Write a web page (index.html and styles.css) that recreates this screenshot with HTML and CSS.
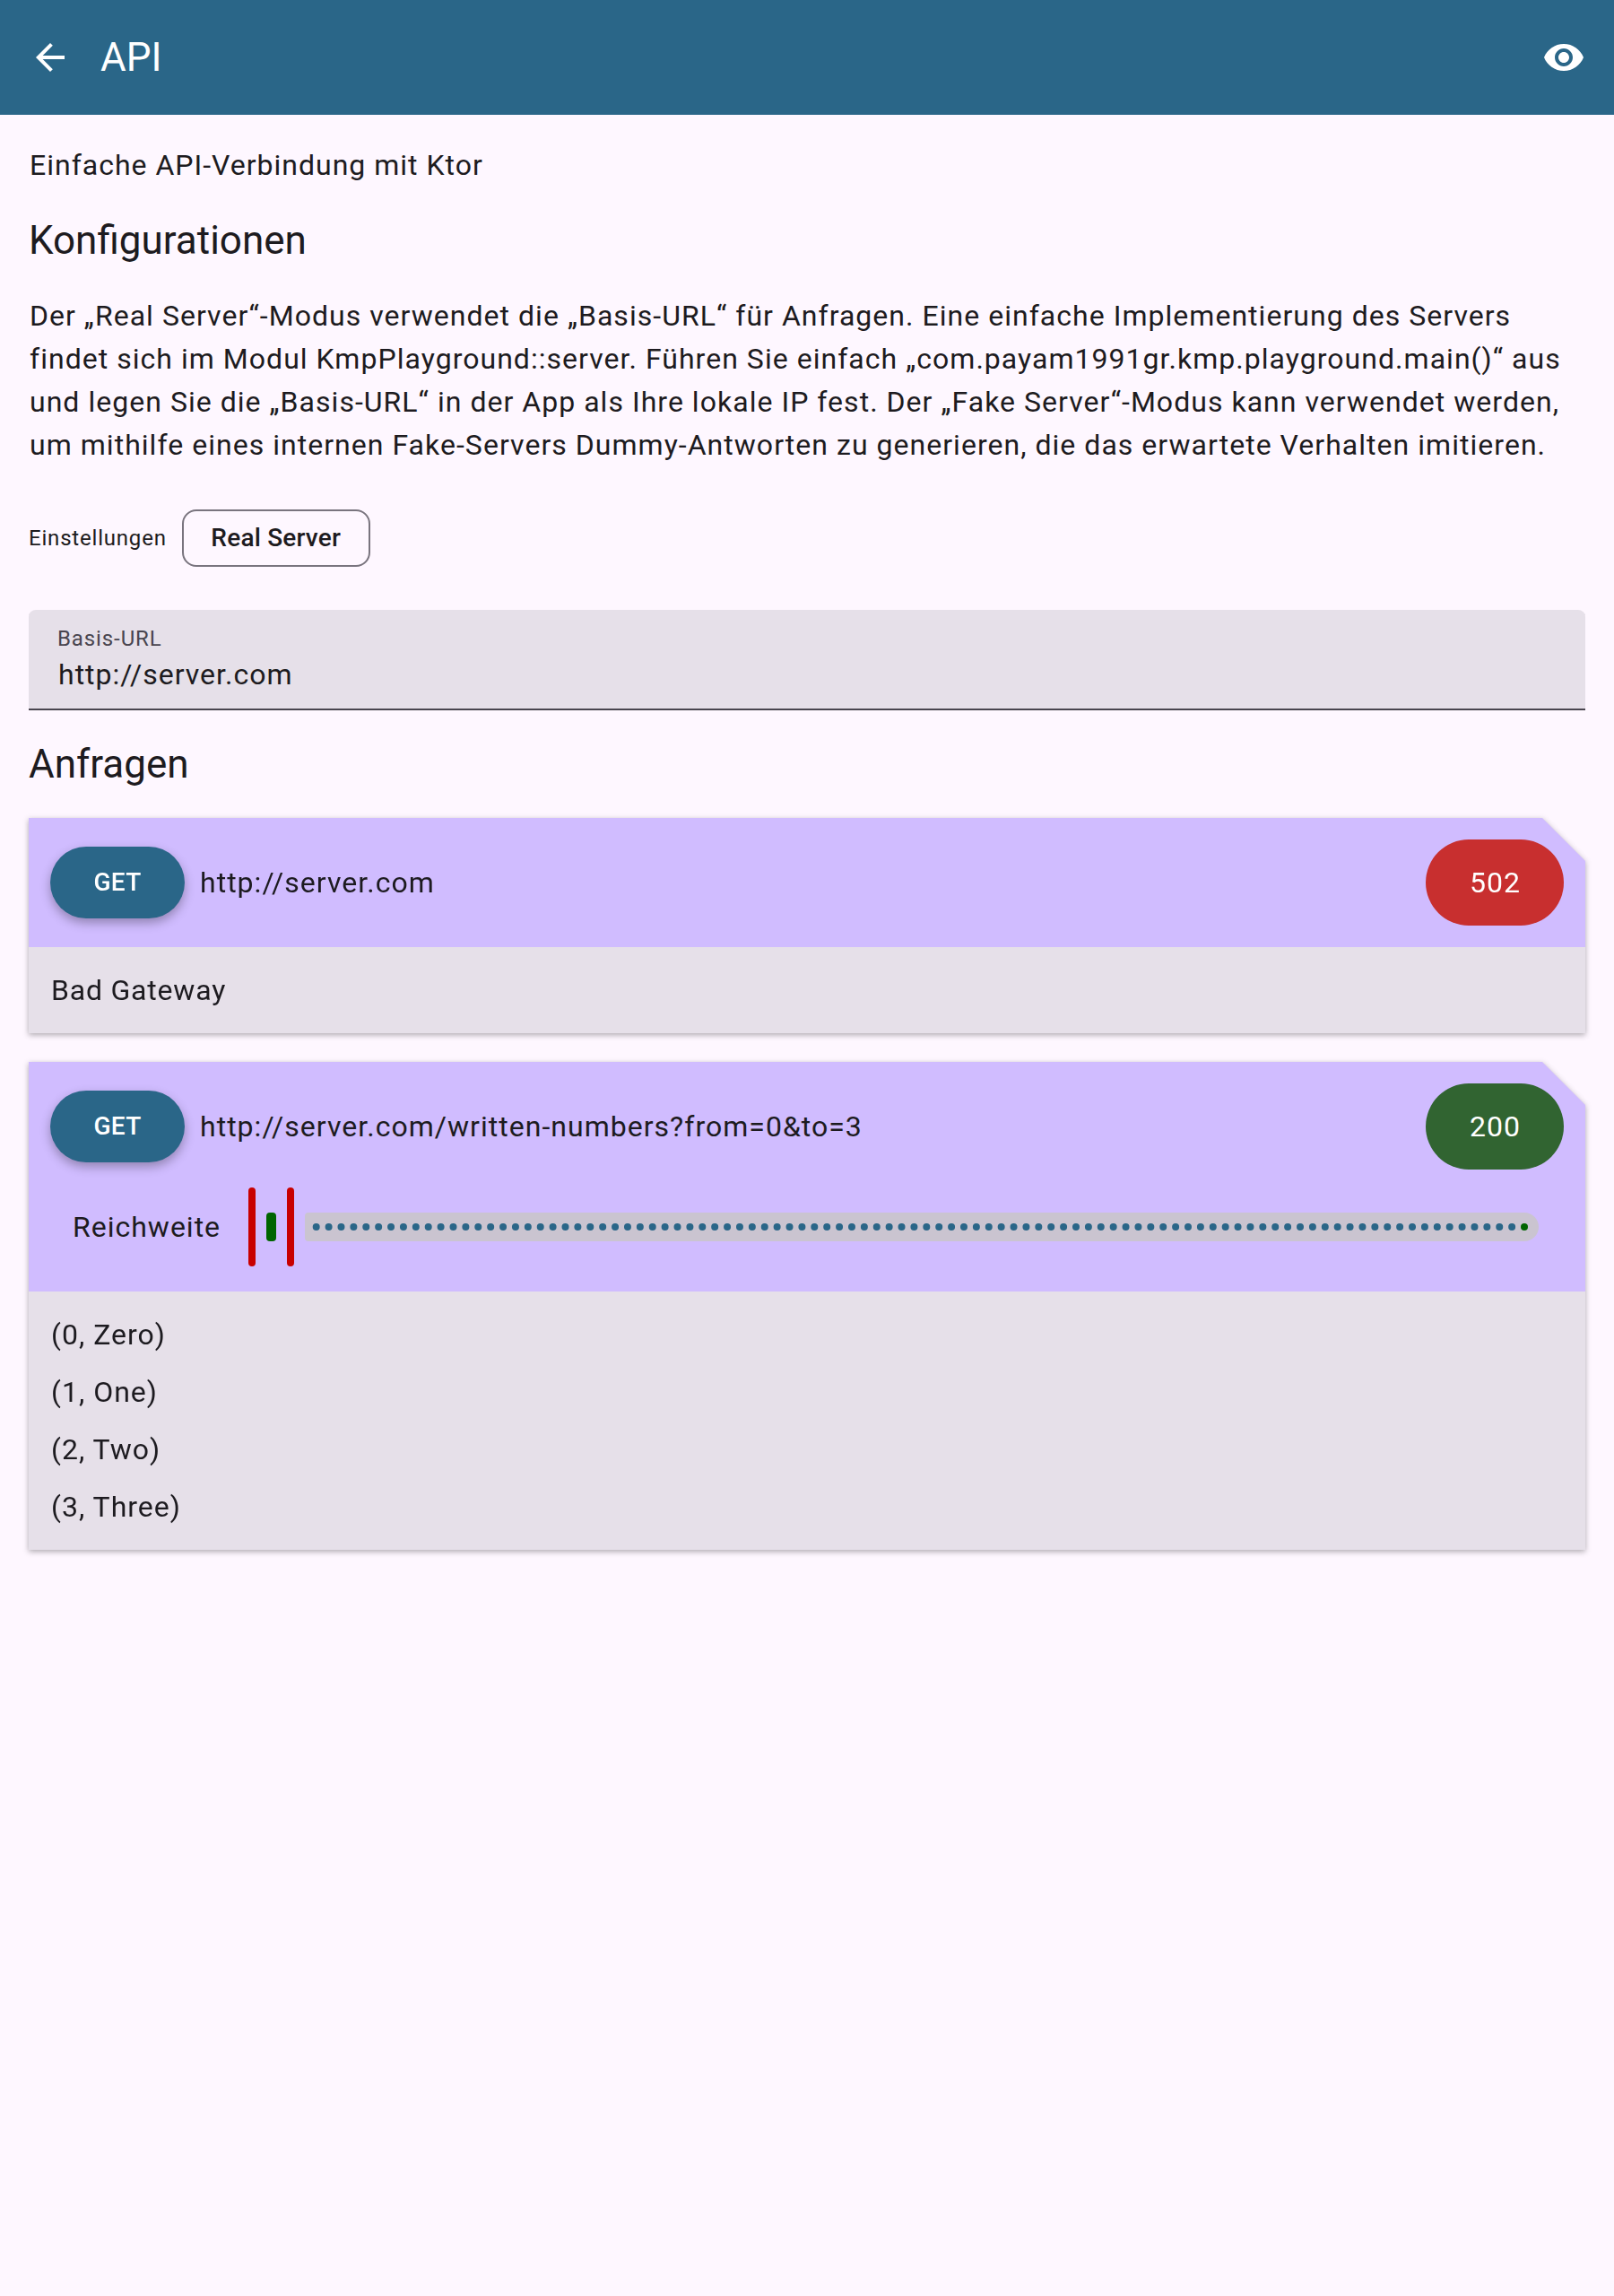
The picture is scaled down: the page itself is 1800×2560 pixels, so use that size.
FILE: index.html
```html
<!DOCTYPE html>
<html lang="de">
<head>
<meta charset="utf-8">
<title>API</title>
<link rel="stylesheet" href="styles.css">
</head>
<body>
<header class="app-bar">
  <svg class="icon" viewBox="0 0 24 24"><path d="M20 11H7.83l5.59-5.59L12 4l-8 8 8 8 1.41-1.41L7.83 13H20v-2z"/></svg>
  <h1 class="title">API</h1>
  <svg class="icon" viewBox="0 0 24 24"><path d="M12 4.5C7 4.5 2.73 7.61 1 12c1.73 4.39 6 7.5 11 7.5s9.27-3.11 11-7.5c-1.73-4.39-6-7.5-11-7.5zM12 17c-2.76 0-5-2.24-5-5s2.24-5 5-5 5 2.24 5 5-2.24 5-5 5zm0-8c-1.66 0-3 1.34-3 3s1.34 3 3 3 3-1.34 3-3-1.34-3-3-3z"/></svg>
</header>
<main class="content">
  <p>Einfache API-Verbindung mit Ktor</p>
  <h2 class="title">Konfigurationen</h2>
  <p class="description">Der „Real Server“-Modus verwendet die „Basis-URL“ für Anfragen. Eine einfache Implementierung des Servers<br>findet sich im Modul KmpPlayground::server. Führen Sie einfach „com.payam1991gr.kmp.playground.main()“ aus<br>und legen Sie die „Basis-URL“ in der App als Ihre lokale IP fest. Der „Fake Server“-Modus kann verwendet werden,<br>um mithilfe eines internen Fake-Servers Dummy-Antworten zu generieren, die das erwartete Verhalten imitieren.</p>
  <div class="settings">
    <span class="small">Einstellungen</span>
    <button class="chip">Real Server</button>
  </div>
  <div class="field">
    <span class="small field-label">Basis-URL</span>
    <span>http://server.com</span>
  </div>
  <h2 class="title">Anfragen</h2>
  <div class="card-shadow">
    <section class="card">
      <div class="card-head">
        <div class="request">
          <button class="get">GET</button>
          <span class="url">http://server.com</span>
          <span class="status status-error">502</span>
        </div>
      </div>
      <div class="card-body"><span class="message">Bad Gateway</span></div>
    </section>
  </div>
  <div class="card-shadow">
    <section class="card">
      <div class="card-head">
        <div class="request">
          <button class="get">GET</button>
          <span class="url">http://server.com/written-numbers?from=0&amp;to=3</span>
          <span class="status status-ok">200</span>
        </div>
        <div class="range">
          <span class="range-label">Reichweite</span>
          <span class="thumb"></span>
          <span class="track-active"></span>
          <span class="thumb"></span>
          <svg class="track" viewBox="0 0 1376 32">
            <path class="track-fill" d="M4 0H1360a16 16 0 0 1 0 32H4a4 4 0 0 1-4-4V4a4 4 0 0 1 4-4z"/>
            <path class="ticks" d="M12.7 16H1347"/>
            <circle class="track-end" cx="1360" cy="16" r="4"/>
          </svg>
        </div>
      </div>
      <div class="card-body">
        <span>(0, Zero)</span>
        <span>(1, One)</span>
        <span>(2, Two)</span>
        <span>(3, Three)</span>
      </div>
    </section>
  </div>
</main>
</body>
</html>
```
FILE: styles.css
```css
* { box-sizing: border-box; }
body {
  margin: 0;
  min-height: 2560px;
  background: #fef7ff;
  color: #1d1b20;
  font: 400 32px/48px Roboto, sans-serif;
  letter-spacing: 1px;
  text-indent: 1px;
}
h1, h2, p { margin: 0; }
button { font: inherit; color: inherit; text-indent: 0; }
.title { font-size: 44px; line-height: 56px; font-weight: 400; letter-spacing: 0; text-indent: 0; }
.small { font-size: 24px; line-height: 32px; letter-spacing: 0.8px; text-indent: 0; }

.app-bar {
  display: flex;
  align-items: center;
  gap: 32px;
  height: 128px;
  padding: 0 32px;
  background: #2a6688;
  color: #fff;
}
.app-bar .title { flex: 1; }
.icon { width: 48px; height: 48px; fill: #fff; }

.content { display: flex; flex-direction: column; gap: 32px; padding: 32px; }
.description { padding-left: 1px; white-space: nowrap; letter-spacing: 1.03px; text-indent: 0; }

.settings { display: flex; align-items: center; gap: 17px; padding: 16px 0; }
.chip {
  width: 210px;
  height: 64px;
  padding: 0;
  border: 2px solid #79747e;
  border-radius: 16px;
  background: none;
  font-size: 28px;
  line-height: 40px;
  font-weight: 500;
  letter-spacing: 0.2px;
}

.field {
  display: flex;
  flex-direction: column;
  height: 112px;
  padding: 16px 32px;
  border-radius: 8px 8px 0 0;
  background: #e6e0e9;
  box-shadow: inset 0 -2px #49454f;
}
.field-label { color: #49454f; letter-spacing: 0.9px; }

.card-shadow { filter: drop-shadow(0 2px 3px rgba(0, 0, 0, 0.32)); }
.card { clip-path: polygon(0 0, calc(100% - 48px) 0, 100% 48px, 100% 100%, 0 100%); }
.card-head { padding: 24px; background: #d0bcff; }
.card-body { display: flex; flex-direction: column; gap: 16px; padding: 24px; background: #e6e0e9; }
.message { letter-spacing: 0.8px; }
.request { display: flex; align-items: center; gap: 16px; }
.url { flex: 1; letter-spacing: 1.02px; }
.get {
  width: 150px;
  height: 80px;
  padding: 0;
  border: 0;
  border-radius: 40px;
  background: #2a6688;
  box-shadow: 0 5px 12px rgba(0, 0, 0, 0.3);
  color: #fff;
  font-size: 28px;
  line-height: 40px;
  font-weight: 500;
  letter-spacing: 0.2px;
}
.status { width: 154px; padding: 24px 0; border-radius: 48px; color: #fff; text-align: center; }
.status-error { background: #c82f2f; }
.status-ok { background: #316431; }

.range { display: flex; align-items: center; height: 88px; margin: 20px 0 4px; padding-left: 24px; }
.range-label { width: 197px; }
.thumb { width: 8px; height: 88px; border-radius: 4px; background: #c80000; }
.track-active { width: 11px; height: 32px; margin: 0 12px; border-radius: 4px; background: #006400; }
.track { width: 1376px; height: 32px; margin-left: 12px; }
.track-fill { fill: #cac4d0; }
.ticks { fill: none; stroke: #2a6688; stroke-width: 8px; stroke-linecap: round; stroke-dasharray: 0 13.89; }
.track-end { fill: #006400; }
```
